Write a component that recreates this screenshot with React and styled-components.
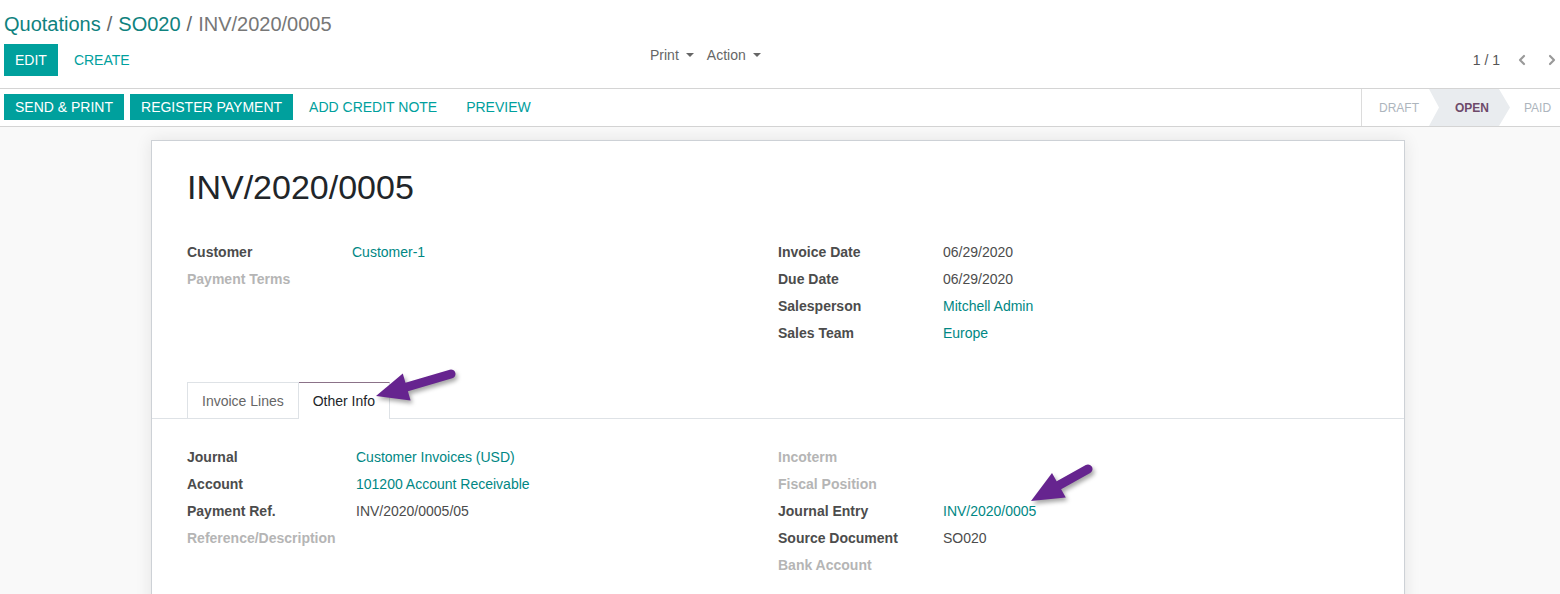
import React from 'react';
import styled, { createGlobalStyle } from 'styled-components';
import { ChevronLeft, ChevronRight } from 'lucide-react';

const GlobalStyle = createGlobalStyle`
  body {
    margin: 0;
    background: #f9f9f9;
    font-family: "Liberation Sans", Arial, sans-serif;
    font-size: 14px;
    color: #4c4c4c;
    overflow: hidden;
  }
`;

const ControlPanel = styled.div`
  background: #fff;
  height: 89px;
  border-bottom: 1px solid #d4d4d4;
  padding: 0 4px;
  box-sizing: border-box;
`;

const Breadcrumbs = styled.div`
  padding-top: 12px;
  font-size: 20px;
  line-height: 24px;
  color: #777;
`;

const Crumb = styled.span`
  color: ${(p) => (p.$active ? '#777' : '#0f827e')};
`;

const Sep = styled.span`
  color: #666;
  margin: 0 6px;
`;

const ButtonRow = styled.div`
  display: flex;
  align-items: flex-start;
  margin-top: 8px;
`;

const MainButtons = styled.div`
  display: flex;
  width: 646px;
  gap: 5px;
`;

const Button = styled.button`
  font-family: inherit;
  font-size: 14px;
  text-transform: uppercase;
  border: none;
  cursor: pointer;
  padding: 0 11px;
  height: ${(p) => (p.$small ? '26px' : '32px')};
  background: ${(p) => (p.$primary ? '#00a09d' : 'transparent')};
  color: ${(p) => (p.$primary ? '#fff' : '#00a09d')};
`;

const Menus = styled.div`
  display: flex;
  gap: 13px;
  padding-top: 1px;
  line-height: 20px;
  color: #666;
`;

const Menu = styled.span`
  display: inline-flex;
  align-items: center;
  gap: 7px;
`;

const Caret = styled.span`
  width: 0;
  height: 0;
  border-left: 4px solid transparent;
  border-right: 4px solid transparent;
  border-top: 4px solid #666;
`;

const Pager = styled.div`
  margin-left: auto;
  height: 32px;
  display: flex;
  align-items: center;
  color: #555;
  gap: 14px;
`;

const PagerArrows = styled.div`
  display: flex;
  gap: 14px;
  color: #999;
  margin-right: -4px;
`;

const Header = styled.div`
  display: flex;
  background: #fff;
  height: 37px;
  border-bottom: 1px solid #d4d4d4;
`;

const HeaderButtons = styled.div`
  display: flex;
  align-items: flex-start;
  padding: 5px 0 0 4px;
  gap: 6px;
  flex: 1;
`;

const FlatGroup = styled.div`
  display: flex;
  gap: 7px;
  margin-left: -1px;
`;

const StatusBar = styled.div`
  display: flex;
  border-left: 1px solid #dcdcdc;
  width: 198px;
  font-size: 12px;
  text-transform: uppercase;
`;

const Status = styled.div`
  display: flex;
  align-items: center;
  box-sizing: border-box;
  width: ${(p) => p.$w}px;
  padding-left: ${(p) => p.$pl}px;
  color: ${(p) => (p.$active ? '#6e4a6a' : '#adb5bd')};
  font-weight: ${(p) => (p.$active ? 700 : 400)};
  background: ${(p) => (p.$active ? '#e9ecef' : 'transparent')};
  clip-path: ${(p) =>
    p.$active
      ? 'polygon(0 0, calc(100% - 11px) 0, 100% 50%, calc(100% - 11px) 100%, 0 100%, 10px 50%)'
      : 'none'};
`;

const Sheet = styled.div`
  position: relative;
  margin: 13px 0 0 151px;
  width: 1254px;
  box-sizing: border-box;
  background: #fff;
  border: 1px solid #cdd1d6;
  box-shadow: 0 0 16px rgba(0, 0, 0, 0.09);
  padding: 26px 0 60px;
`;

const Title = styled.h1`
  margin: 0 35px;
  font-size: 34px;
  line-height: 41px;
  font-weight: 400;
  color: #212529;
`;

const Groups = styled.div`
  display: grid;
  grid-template-columns: 1fr 1fr;
  padding: ${(p) => p.$pad};
  margin: 0 35px;
`;

const Row = styled.div`
  display: flex;
  height: 27px;
  align-items: center;
`;

const Label = styled.div`
  width: ${(p) => p.$w || 165}px;
  flex: none;
  font-weight: 700;
  color: ${(p) => (p.$muted ? '#b5b5b5' : '#4c4c4c')};
`;

const Value = styled.div`
  color: ${(p) => (p.$link ? '#008784' : '#4c4c4c')};
`;

const Tabs = styled.div`
  display: flex;
  padding-left: 35px;
  border-bottom: 1px solid #dee2e6;
  margin-top: 36px;
`;

const Tab = styled.div`
  padding: 0 14px;
  display: flex;
  align-items: center;
  border: 1px solid #dee2e6;
  border-top-color: ${(p) => (p.$active ? '#8b7288' : '#dee2e6')};
  border-bottom: none;
  margin-bottom: ${(p) => (p.$active ? '-1px' : '0')};
  height: ${(p) => (p.$active ? '36px' : '35px')};
  background: #fff;
  color: ${(p) => (p.$active ? '#212529' : '#666')};
  & + & {
    border-left: none;
  }
`;

const Annotation = styled.svg`
  position: absolute;
  left: ${(p) => p.$x}px;
  top: ${(p) => p.$y}px;
  overflow: visible;
  filter: drop-shadow(2px 3px 2px rgba(0, 0, 0, 0.35));
`;

function Arrow({ x, y, w, h, tail, tip, base }) {
  return (
    <Annotation $x={x} $y={y} width={w} height={h}>
      <line x1={tail[0]} y1={tail[1]} x2={base[0][0] / 2 + base[1][0] / 2} y2={base[0][1] / 2 + base[1][1] / 2}
        stroke="#66248f" strokeWidth="9" strokeLinecap="round" />
      <polygon points={`${tip.join(',')} ${base[0].join(',')} ${base[1].join(',')}`} fill="#66248f" />
    </Annotation>
  );
}

function FieldRow({ label, value, link, muted, w }) {
  return (
    <Row>
      <Label $muted={muted} $w={w}>{label}</Label>
      {value && <Value $link={link}>{value}</Value>}
    </Row>
  );
}

export default function App() {
  return (
    <>
      <GlobalStyle />
      <ControlPanel>
        <Breadcrumbs>
          <Crumb>Quotations</Crumb>
          <Sep>/</Sep>
          <Crumb>SO020</Crumb>
          <Sep>/</Sep>
          <Crumb $active>INV/2020/0005</Crumb>
        </Breadcrumbs>
        <ButtonRow>
          <MainButtons>
            <Button $primary>Edit</Button>
            <Button>Create</Button>
          </MainButtons>
          <Menus>
            <Menu>Print <Caret /></Menu>
            <Menu>Action <Caret /></Menu>
          </Menus>
          <Pager>
            <span>1 / 1</span>
            <PagerArrows>
              <ChevronLeft size={16} strokeWidth={3.2} />
              <ChevronRight size={16} strokeWidth={3.2} />
            </PagerArrows>
          </Pager>
        </ButtonRow>
      </ControlPanel>

      <Header>
        <HeaderButtons>
          <Button $primary $small>Send &amp; Print</Button>
          <Button $primary $small>Register Payment</Button>
          <FlatGroup>
            <Button $small>Add Credit Note</Button>
            <Button $small>Preview</Button>
          </FlatGroup>
        </HeaderButtons>
        <StatusBar>
          <Status $w={67} $pl={17}>Draft</Status>
          <Status $w={81} $pl={26} $active>Open</Status>
          <Status $w={49} $pl={14}>Paid</Status>
        </StatusBar>
      </Header>

      <Sheet>
        <Title>INV/2020/0005</Title>
        <Groups $pad="30px 0 0">
          <div>
            <FieldRow label="Customer" value="Customer-1" link />
            <FieldRow label="Payment Terms" muted />
          </div>
          <div>
            <FieldRow label="Invoice Date" value="06/29/2020" />
            <FieldRow label="Due Date" value="06/29/2020" />
            <FieldRow label="Salesperson" value="Mitchell Admin" link />
            <FieldRow label="Sales Team" value="Europe" link />
          </div>
        </Groups>

        <Tabs>
          <Tab>Invoice Lines</Tab>
          <Tab $active>Other Info</Tab>
        </Tabs>

        <Groups $pad="24px 0 0">
          <div>
            <FieldRow w={169} label="Journal" value="Customer Invoices (USD)" link />
            <FieldRow w={169} label="Account" value="101200 Account Receivable" link />
            <FieldRow w={169} label="Payment Ref." value="INV/2020/0005/05" />
            <FieldRow w={169} label="Reference/Description" muted />
          </div>
          <div>
            <FieldRow label="Incoterm" muted />
            <FieldRow label="Fiscal Position" muted />
            <FieldRow label="Journal Entry" value="INV/2020/0005" link />
            <FieldRow label="Source Document" value="SO020" />
            <FieldRow label="Bank Account" muted />
          </div>
        </Groups>

        <Arrow x={214} y={220} w={95} h={55}
          tail={[85, 13]} tip={[10, 35]} base={[[36.8, 12.6], [44.6, 39.4]]} />
        <Arrow x={869} y={315} w={80} h={60}
          tail={[67, 13]} tip={[10, 45]} base={[[31, 17.1], [44.8, 41.5]]} />
      </Sheet>
    </>
  );
}
